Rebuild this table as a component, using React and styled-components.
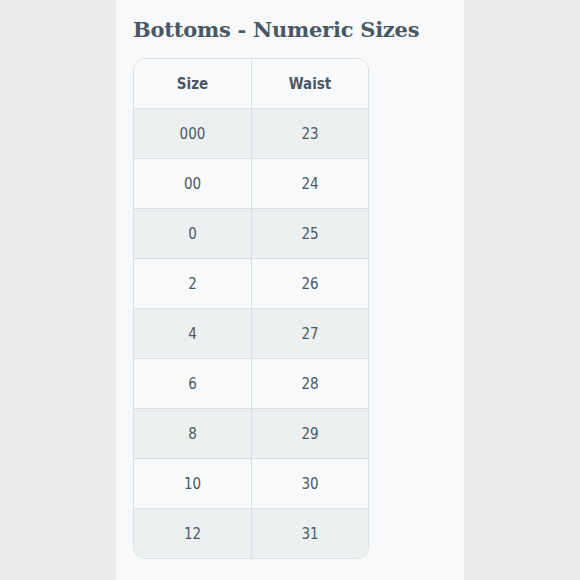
import React from "react";
import styled, { createGlobalStyle } from "styled-components";

const GlobalStyle = createGlobalStyle`
  html, body {
    margin: 0;
    padding: 0;
    background: #ebebeb;
  }
`;

const Page = styled.div`
  display: flex;
  justify-content: flex-start;
  min-height: 580px;
  padding-left: 116px;
`;

const Panel = styled.div`
  width: 348px;
  min-height: 580px;
  background: #f8f9fa;
  padding: 15px 17px 0;
  box-sizing: border-box;
`;

const Title = styled.h2`
  margin: 0 0 14px;
  font-family: "DejaVu Serif", Georgia, serif;
  font-weight: bold;
  font-size: 21px;
  line-height: 29px;
  color: #4a5866;
  letter-spacing: -0.25px;
`;

const Table = styled.div`
  width: 236px;
  border: 1px solid #dcdfe2;
  border-radius: 12px;
  overflow: hidden;
  box-sizing: border-box;
`;

const Row = styled.div`
  display: grid;
  grid-template-columns: 1fr 1fr;
  height: 49px;
  box-sizing: border-box;
  background: ${(p) => (p.$shaded ? "#edf0f1" : "#f9fafb")};
  & + & {
    height: 50px;
    border-top: 1px solid #dcdfe2;
  }
`;

const Cell = styled.div`
  display: flex;
  align-items: center;
  justify-content: center;
  font-family: "DejaVu Sans Condensed", Tahoma, sans-serif;
  font-size: 15px;
  font-weight: ${(p) => (p.$head ? "bold" : "normal")};
  color: #4a5866;
  & + & {
    border-left: 1px solid #dcdfe2;
  }
`;

const sizes = [
  ["000", "23"],
  ["00", "24"],
  ["0", "25"],
  ["2", "26"],
  ["4", "27"],
  ["6", "28"],
  ["8", "29"],
  ["10", "30"],
  ["12", "31"],
];

export default function App() {
  return (
    <>
      <GlobalStyle />
      <Page>
        <Panel>
          <Title>Bottoms - Numeric Sizes</Title>
          <Table>
            <Row>
              <Cell $head>Size</Cell>
              <Cell $head>Waist</Cell>
            </Row>
            {sizes.map(([size, waist], i) => (
              <Row key={size} $shaded={i % 2 === 0}>
                <Cell>{size}</Cell>
                <Cell>{waist}</Cell>
              </Row>
            ))}
          </Table>
        </Panel>
      </Page>
    </>
  );
}
